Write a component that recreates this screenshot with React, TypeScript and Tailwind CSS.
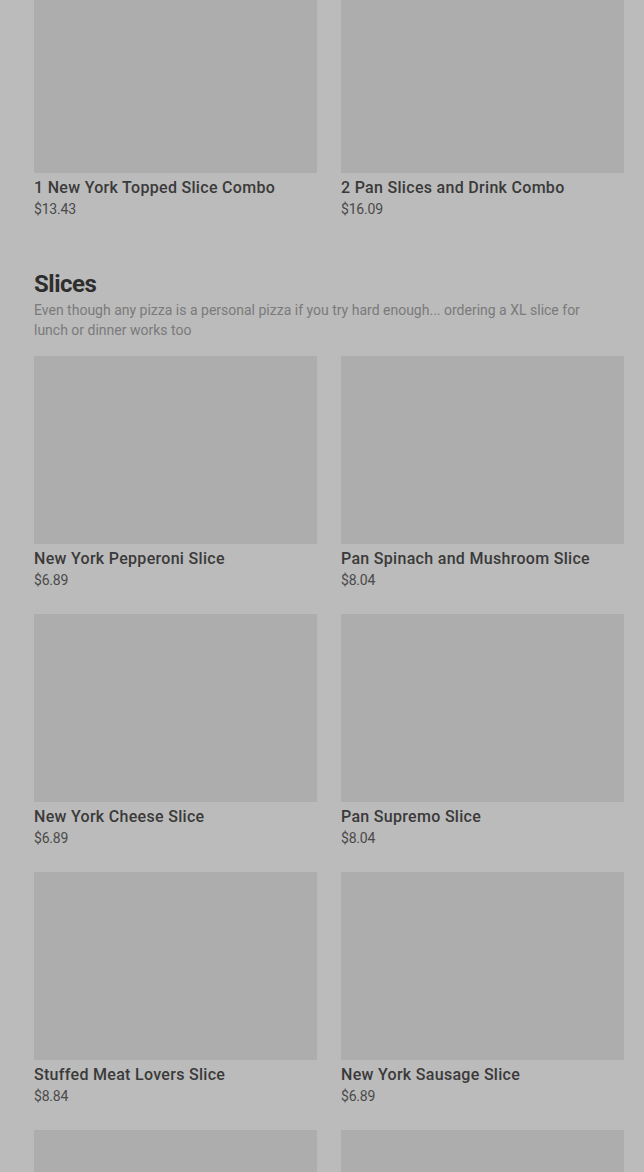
const combos = [
  { name: "1 New York Topped Slice Combo", price: "$13.43" },
  { name: "2 Pan Slices and Drink Combo", price: "$16.09" },
];

const slices = [
  { name: "New York Pepperoni Slice", price: "$6.89" },
  { name: "Pan Spinach and Mushroom Slice", price: "$8.04" },
  { name: "New York Cheese Slice", price: "$6.89" },
  { name: "Pan Supremo Slice", price: "$8.04" },
  { name: "Stuffed Meat Lovers Slice", price: "$8.84" },
  { name: "New York Sausage Slice", price: "$6.89" },
  { name: "", price: "" },
  { name: "", price: "" },
];

function Item({ name, price }: { name: string; price: string }) {
  return (
    <div>
      <div className="h-[188px] bg-[#adadad]" />
      {name && (
        <>
          <div className="mt-[5px] text-[16px] leading-5 font-medium tracking-[0.3px] text-[#3a3a3a]">
            {name}
          </div>
          <div className="mt-[1px] text-[14px] leading-5 tracking-[-0.2px] text-[#4a4a4a]">{price}</div>
        </>
      )}
    </div>
  );
}

export default function App() {
  return (
    <div className="h-[1172px] overflow-hidden bg-[#bbbbbb] font-['Roboto',sans-serif]">
      <div className="-mt-[15px] pl-[34px] pr-[20px]">
        <div className="grid grid-cols-2 gap-x-6 gap-y-6">
          {combos.map((c) => (
            <Item key={c.name} {...c} />
          ))}
        </div>

        <h2 className="mt-[49px] text-[24px] leading-8 font-bold tracking-[-0.5px] text-[#2e2e2e]">
          Slices
        </h2>
        <p className="text-[14px] leading-5 text-[#7a7a7a] pr-2">
          Even though any pizza is a personal pizza if you try hard enough... ordering a XL slice for
          lunch or dinner works too
        </p>

        <div className="mt-4 grid grid-cols-2 gap-x-6 gap-y-6">
          {slices.map((s, i) => (
            <Item key={i} {...s} />
          ))}
        </div>
      </div>
    </div>
  );
}
